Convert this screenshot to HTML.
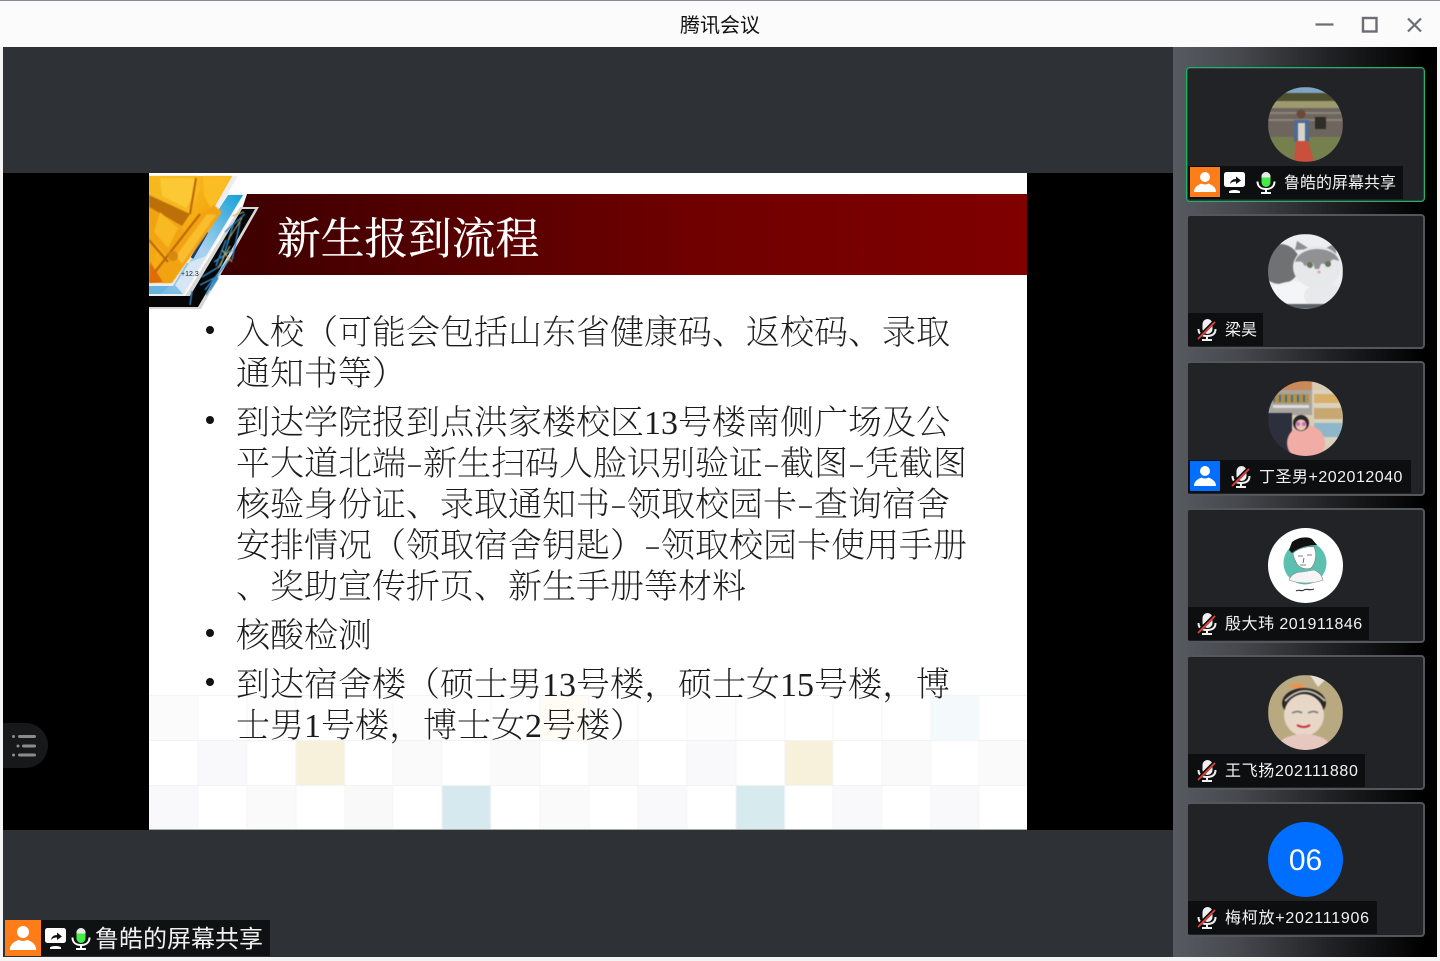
<!DOCTYPE html>
<html lang="zh"><head><meta charset="utf-8"><title>腾讯会议</title>
<style>
html,body{margin:0;padding:0;width:1440px;height:960px;overflow:hidden;background:#f4f4f4}
*{box-sizing:border-box}
.a{position:absolute}
#title{left:0;top:0;width:1440px;height:47px;background:#fbfbfb;border-top:1px solid #8a8a90;text-align:center;font:20px/50px "Liberation Sans","Noto Sans CJK SC",sans-serif;color:#111}
#main{left:3px;top:47px;width:1170px;height:910px;background:#2e3236}
#black{left:3px;top:173px;width:1170px;height:657px;background:#000}
#side{left:1173px;top:47px;width:264px;height:910px;background:linear-gradient(90deg,#575b61 0,#45484d 25%,#222326 58%,#000 95%)}
#slide{left:149px;top:173px;width:878px;height:657px;background:#fff;overflow:hidden}
.l{position:absolute;left:236px;white-space:nowrap;font:200 34px/40px "Liberation Serif","Noto Serif CJK SC",serif;color:#1b1b1b}
.h{display:inline-block;width:17px;text-align:center;color:#444;transform:scale(1.45,.7)}
.b{position:absolute;left:206px;width:8px;height:8px;border-radius:50%;background:#111}
.card{position:absolute;left:1186px;width:239px;height:135px;background:#222326;border:2px solid #54565b;border-radius:4px}
.lab{position:absolute;height:33px;background:#0c0e0f;color:#f2f2f2;font:16px/35px "Liberation Sans","Noto Sans CJK SC",sans-serif;white-space:nowrap}
.t{position:absolute;top:0}
.ph{filter:blur(.5px)}
</style></head><body>
<svg width="0" height="0" style="position:absolute"><defs>
<symbol id="person" viewBox="0 0 30 30"><circle cx="15" cy="10" r="5" fill="#fff"/><path d="M4 25c0-5 4-7 7.500-8.500 2 1.300 5 1.300 7 0C22 18 26 20 26 25z" fill="#fff"/></symbol>
<symbol id="share" viewBox="0 0 22 22"><rect x="0" y="0" width="21" height="15" rx="2.500" fill="#fff"/><path d="M5 19.500c1-2 10-2 11 0v1.500H5z" fill="#fff"/><path d="M6 12c.5-3.500 3-5 6-5V4.500l5 4-5 3.500V9.500c-2.500 0-4.500.5-6 2.500z" fill="#111"/></symbol>
<symbol id="micg" viewBox="0 0 20 22"><rect x="5.500" y="0" width="9" height="15" rx="4.500" fill="#46ec46"/><path d="M5.500 4.500a4.500 4.500 0 0 1 9 0v1h-9z" fill="#e8e8e8"/><path d="M1.500 9.500c0 5 3.500 7.500 8.500 7.500s8.500-2.500 8.500-7.500" fill="none" stroke="#fff" stroke-width="2"/><path d="M9 17h2v3h4v2H5v-2h4z" fill="#fff"/></symbol>
<symbol id="micx" viewBox="0 0 20 22"><rect x="5.500" y="0" width="10" height="15" rx="5" fill="#f0f0f0"/><path d="M1.500 10c0 5 3.500 7 8.500 7s8.500-2 8.500-7" fill="none" stroke="#f0f0f0" stroke-width="2"/><path d="M9 17h2v3h4v2H5v-2h4z" fill="#f0f0f0"/><path d="M1 19L18 2" stroke="#0c0e0f" stroke-width="3.600"/><path d="M1 20L18 3" stroke="#e8403a" stroke-width="1.800"/></symbol>
</defs></svg>

<div class="a" id="title">腾讯会议</div>
<svg class="a" style="left:1300px;top:0" width="140" height="47"><path d="M15.500 24.500h18" stroke="#6c6e73" stroke-width="2.200"/><rect x="63" y="18" width="13.500" height="13.500" fill="none" stroke="#6c6e73" stroke-width="2.400"/><path d="M108 18.500l13 13M121 18.500l-13 13" stroke="#6c6e73" stroke-width="2.200"/></svg>

<div class="a" id="main"></div>
<div class="a" id="side"></div>
<div class="a" id="black"></div>

<div class="a" id="slide">
<svg class="a" style="left:0;top:0" width="878" height="657" viewBox="149 173 878 657">
<defs>
<linearGradient id="red" x1="0" x2="1" y1="0" y2="0"><stop offset="0" stop-color="#3d0000"/><stop offset=".2" stop-color="#4d0000"/><stop offset=".6" stop-color="#700000"/><stop offset="1" stop-color="#800000"/></linearGradient>
<linearGradient id="gold" x1="0" x2="1" y1="0" y2="1"><stop offset="0" stop-color="#ffc62a"/><stop offset=".5" stop-color="#f5a911"/><stop offset="1" stop-color="#e8800a"/></linearGradient>
<linearGradient id="blue" x1="1" x2="0" y1="0" y2="1"><stop offset="0" stop-color="#14a0d8"/><stop offset=".5" stop-color="#a9d2ee"/><stop offset="1" stop-color="#6fb8e2"/></linearGradient>
</defs>
<!-- tiles -->
<g transform="translate(-.6 0)">
<g fill="#fcfbfc">
<rect x="149" y="695" width="49" height="45"/><rect x="247" y="695" width="49" height="45" fill="#fdfdfd"/><rect x="540" y="695" width="49" height="45" fill="#fefcf5"/><rect x="931" y="695" width="48" height="45" fill="#f4fafb"/>
<rect x="393" y="695" width="49" height="45" fill="#fdfdfd"/><rect x="687" y="695" width="49" height="45" fill="#fdfdfd"/>
</g>
<g fill="#f9f8fa">
<rect x="198" y="740" width="49" height="45"/><rect x="296" y="740" width="49" height="45" fill="#f7f1dc"/><rect x="393" y="740" width="49" height="45" fill="#fafafa"/><rect x="491" y="740" width="49" height="45" fill="#fafafa"/><rect x="589" y="740" width="49" height="45" fill="#fafafa"/><rect x="687" y="740" width="49" height="45"/><rect x="785" y="740" width="48" height="45" fill="#f7f1dc"/><rect x="882" y="740" width="49" height="45" fill="#fafafa"/><rect x="979" y="740" width="49" height="45" fill="#fafafa"/>
<rect x="149" y="785" width="49" height="45"/><rect x="247" y="785" width="49" height="45" fill="#fafafa"/><rect x="345" y="785" width="48" height="45" fill="#f9f9f9"/><rect x="442" y="785" width="49" height="45" fill="#d5e9ef"/><rect x="540" y="785" width="49" height="45" fill="#fafafa"/><rect x="638" y="785" width="49" height="45"/><rect x="736" y="785" width="49" height="45" fill="#d7eaee"/><rect x="833" y="785" width="49" height="45"/><rect x="931" y="785" width="48" height="45"/>
</g>
<path d="M198.500 695V830M247.500 695V830M296.500 695V830M345.500 695V830M393.500 695V830M442.500 695V830M491.500 695V830M540.500 695V830M589.500 695V830M638.500 695V830M687.500 695V830M736.500 695V830M785.500 695V830M833.500 695V830M882.500 695V830M931.500 695V830M979.500 695V830" stroke="#f6f5f7" stroke-width="1"/>
</g>
<path d="M149 695.500H1027M149 740.500H1027M149 785.500H1027" stroke="#f3f2f4" stroke-width="1"/>
<path d="M149 829.500H1027" stroke="#aaa"/>
<!-- banner -->
<polygon points="247,194 1027,194 1027,275 220,275" fill="url(#red)"/>
<!-- black layer -->
<polygon points="149,309 201,309 259,207 240,207 185,296 149,296" fill="#d8d8d8"/>
<polygon points="149,307 198,307 255,209 242,209 190,296 149,296" fill="#060606"/>
<g class="ph">
<path d="M233 225l-12 40M240 222l-8 38M214 262l18-12M205 290l24-30M190 305l2-14M210 290l8-12M222 265l-20 12M245 214l-20 18M226 240l-10 26M218 275l-12 20M200 285l16-8" stroke="#2f86c4" stroke-width="1.500" fill="none"/>
<path d="M228 240l14-22M218 268l12-22M244 212l-12 4M222 250l10 12" stroke="#d0b050" stroke-width="1"/>
</g>
<!-- blue layer -->
<polygon points="149,296 184,296 245,194 232,194 172,286 149,286" fill="#f0f0f0"/>
<polygon points="149,294 183,294 243,195 228,195 170,284 149,284" fill="url(#blue)"/>
<path d="M186 262L218 210" stroke="#f6e6d0" stroke-width="6"/>
<path d="M192 258L207 232" stroke="#1d3b78" stroke-width="3"/>
<polygon points="175,285 183,294 206,256 190,262" fill="#d6e6f4"/>
<polygon points="149,284 172,284 160,294 149,294" fill="#68b4e0"/>
<text x="181" y="276" font-family="Liberation Sans,sans-serif" font-size="7" fill="#223">+12.3</text>
<!-- gold -->
<polygon points="149,176 238,176 173,286 149,286" fill="#ededed"/>
<polygon points="149,176 232,176 171,283 149,283" fill="url(#gold)"/>
<g class="ph">
<polygon points="149,176 199,176 200,190 190,214 149,195" fill="#f6b81f"/>
<polygon points="160,178 195,178 195,192 186,208 162,196" fill="#fcc935"/>
<polygon points="149,195 190,214 182,226 149,207" fill="#bd6f08"/>
<polygon points="203,176 232,176 212,210 204,195" fill="#fbbe22"/>
<polygon points="149,207 180,226 186,234 170,260 158,246 149,240" fill="#f2a312"/>
<polygon points="160,212 178,228 168,248 154,232" fill="#f9b923"/>
<polygon points="149,240 158,246 150,270 149,270" fill="#f3a815"/>
<polygon points="155,272 200,214 214,205 222,212 172,283 162,283" fill="#f2a312"/>
<polygon points="176,256 207,214 216,215 182,264" fill="#f9bd2d"/>
<polygon points="150,262 163,282 149,283" fill="#e06c06"/>
<path d="M155 272L200 214M149 240L168 262M196 178L190 214" stroke="#b96408" stroke-width="2"/>
<circle cx="173" cy="256" r="5" fill="#d88710"/>
</g>
<text x="277" y="253" font-family="Liberation Serif,Noto Serif CJK SC,serif" font-size="43.700" fill="#fff" stroke="#fff" stroke-width=".3" transform="translate(0 1)">新生报到流程</text>
</svg>
</div>

<div class="b" style="top:326px"></div>
<div class="l" style="top:314px">入校（可能会包括山东省健康码、返校码、录取</div>
<div class="l" style="top:355px">通知书等）</div>
<div class="b" style="top:416px"></div>
<div class="l" style="top:404px">到达学院报到点洪家楼校区13号楼南侧广场及公</div>
<div class="l" style="top:445px">平大道北端<span class="h">-</span>新生扫码人脸识别验证<span class="h">-</span>截图<span class="h">-</span>凭截图</div>
<div class="l" style="top:486px">核验身份证、录取通知书<span class="h">-</span>领取校园卡<span class="h">-</span>查询宿舍</div>
<div class="l" style="top:527px">安排情况（领取宿舍钥匙）<span class="h">-</span>领取校园卡使用手册</div>
<div class="l" style="top:568px">、奖助宣传折页、新生手册等材料</div>
<div class="b" style="top:629px"></div>
<div class="l" style="top:617px">核酸检测</div>
<div class="b" style="top:678px"></div>
<div class="l" style="top:666px">到达宿舍楼（硕士男13号楼，硕士女15号楼，博</div>
<div class="l" style="top:707px">士男1号楼，博士女2号楼）</div>

<!-- side toggle -->
<div class="a" style="left:3px;top:723px;width:45px;height:45px;background:#17181a;border-radius:0 23px 23px 0"></div>
<svg class="a" style="left:10px;top:733px" width="30" height="26"><g fill="#8b8b8b"><circle cx="3.500" cy="3.500" r="1.500"/><rect x="8" y="2" width="18" height="3" rx="1.500"/><circle cx="8" cy="13" r="1.500"/><rect x="12" y="11.500" width="14" height="3" rx="1.500"/><circle cx="3.500" cy="22" r="1.500"/><rect x="8" y="20.500" width="18" height="3" rx="1.500"/></g></svg>

<!-- bottom label -->
<div class="a" style="left:5px;top:920px;width:265px;height:36px;background:#0f1113"></div>
<div class="a" style="left:5px;top:920px;width:36px;height:36px;background:#ff7d19"><svg width="36" height="36"><use href="#person" width="36" height="36"/></svg></div>
<svg class="a" style="left:45px;top:928px" width="22" height="22"><use href="#share" width="22" height="22"/></svg>
<svg class="a" style="left:71px;top:928px" width="20" height="22"><use href="#micg" width="20" height="22"/></svg>
<div class="a" style="left:95px;top:920px;font:24px/40px 'Liberation Sans','Noto Sans CJK SC',sans-serif;color:#f0f0f0;white-space:nowrap">鲁皓的屏幕共享</div>

<!-- cards -->
<div class="card" style="top:67px;border:1px solid #17b866;box-shadow:inset 0 0 0 1px #3a3c40"></div>
<div class="card" style="top:214px"></div>
<div class="card" style="top:361px"></div>
<div class="card" style="top:508px"></div>
<div class="card" style="top:655px"></div>
<div class="card" style="top:802px"></div>

<!-- avatars -->
<svg class="a" style="left:1268px;top:87px" width="75" height="75" viewBox="0 0 75 75"><defs><clipPath id="c1"><circle cx="37.500" cy="37.500" r="37.500"/></clipPath></defs><g clip-path="url(#c1)"><g class="ph"><rect width="75" height="75" fill="#7d7466"/><rect width="75" height="7" fill="#7fa5c4"/><rect y="6" width="75" height="8" fill="#4e5030"/><rect y="14" width="75" height="8" fill="#9e9a70"/><rect y="21" width="75" height="33" fill="#6e665e"/><path d="M0 26h75M0 33h75" stroke="#8b8477" stroke-width="2"/><rect x="47" y="30" width="11" height="12" fill="#2f2d28"/><rect y="50" width="75" height="25" fill="#76804f"/><rect x="26" y="33" width="15" height="22" fill="#4d6a92"/><rect x="30" y="36" width="7" height="18" fill="#d8d4ca"/><circle cx="33" cy="27" r="4.500" fill="#6a4a38"/><polygon points="28,54 40,54 46,75 26,75" fill="#c8503c"/></g></g></svg>

<svg class="a" style="left:1268px;top:234px" width="75" height="75" viewBox="0 0 75 75"><defs><clipPath id="c2"><circle cx="37.500" cy="37.500" r="37.500"/></clipPath></defs><g clip-path="url(#c2)"><g class="ph"><rect width="75" height="75" fill="#eceff1"/><ellipse cx="12" cy="30" rx="20" ry="20" fill="#6f7172"/><ellipse cx="30" cy="62" rx="32" ry="15" fill="#f4f5f6"/><ellipse cx="56" cy="62" rx="20" ry="13" fill="#e8e9eb"/><path d="M27 16l2-9 13 8zM58 14l10-5v13z" fill="#8d8f91"/><ellipse cx="49" cy="33" rx="24" ry="21" fill="#e6e8ea"/><path d="M27 28c2-8 12-13 22-13s20 4 22 12c-5-2-8-3-9 3-2 2-5-1-9 0l-2 5h-4l-2-6c-5-1-7 5-9 2-1-4-5-4-9-3z" fill="#8f9193"/><circle cx="42" cy="31" r="3" fill="#66755c"/><circle cx="60" cy="30" r="3" fill="#66755c"/><circle cx="51" cy="38" r="1.500" fill="#e3a0ac"/><rect y="70" width="75" height="5" fill="#5b6066"/></g></g></svg>

<svg class="a" style="left:1268px;top:381px" width="75" height="75" viewBox="0 0 75 75"><defs><clipPath id="c3"><circle cx="37.500" cy="37.500" r="37.500"/></clipPath></defs><g clip-path="url(#c3)"><g class="ph"><rect width="75" height="75" fill="#d8cdb4"/><rect width="44" height="9" fill="#c98a5a"/><rect y="9" width="44" height="25" fill="#a9a4a0"/><rect x="5" y="13" width="36" height="9" fill="#b89040"/><path d="M6 14v7M12 14v7M18 14v7M24 14v7M30 14v7M36 14v7" stroke="#3d6f9e" stroke-width="2"/><rect x="5" y="24" width="36" height="3" fill="#ddd"/><rect x="45" y="9" width="30" height="56" fill="#d9d2bf"/><rect x="46" y="13" width="28" height="9" fill="#d9b06a"/><rect x="46" y="27" width="28" height="11" fill="#c7a871"/><rect x="46" y="42" width="28" height="14" fill="#8fb7c9"/><rect x="0" y="32" width="24" height="43" fill="#2c2f3c"/><ellipse cx="38" cy="62" rx="19" ry="18" fill="#f1aca5"/><circle cx="33" cy="42" r="8" fill="#2a2528"/><circle cx="33" cy="44" r="5.500" fill="#e8c4b4"/><circle cx="30" cy="43" r="2" fill="#c86ac0"/><circle cx="36" cy="43" r="2" fill="#c86ac0"/></g></g></svg>

<svg class="a" style="left:1268px;top:528px" width="75" height="75" viewBox="0 0 75 75"><circle cx="37.500" cy="37.500" r="37.500" fill="#fff"/><circle cx="37" cy="35" r="21.500" fill="#5cc0b0"/><path d="M21 22l3-8c6-5 16-6 20-3l5 6c-8 0-18 2-25 8z" fill="#111"/><path d="M25 25c6-5 15-7 21-6 3 6 2 16-3 21-5 2-11 0-14-4-2-4-4-7-4-11z" fill="#fff" stroke="#777" stroke-width=".6"/><path d="M30 28h5M39 27h5M36 30l-1 5M32 37h6" stroke="#555" stroke-width=".8" fill="none"/><path d="M21 52c3-7 9-8 13-8l12-2c6 2 8 6 9 10-10 4-24 4-34 0z" fill="#f5f5f5" stroke="#888" stroke-width=".6"/><path d="M28 63c3-2 6 1 8-1s6 1 10-1" stroke="#333" stroke-width="1.200" fill="none"/></svg>

<svg class="a" style="left:1268px;top:675px" width="75" height="75" viewBox="0 0 75 75"><defs><clipPath id="c5"><circle cx="37.500" cy="37.500" r="37.500"/></clipPath></defs><g clip-path="url(#c5)"><g class="ph"><rect width="75" height="75" fill="#b9a981"/><path d="M42 0l8 12 10-10-4-2z" fill="#e8e2d8"/><path d="M20 11c6-3 12-3 18 0l-8 3z" fill="#f0904a"/><ellipse cx="36" cy="28" rx="22" ry="15" fill="#2c2524"/><ellipse cx="36" cy="40" rx="20" ry="21" fill="#e6d7c6"/><path d="M24 38q6-3 10 0M40 38q6-3 10 0" stroke="#777" stroke-width="1.500" fill="none"/><path d="M29 50q7 4 13 0" stroke="#d03040" stroke-width="2" fill="none"/><ellipse cx="36" cy="72" rx="26" ry="13" fill="#e6c8c0"/><path d="M17 26q20-20 40 0" stroke="#bfc0b0" stroke-width="2" fill="none"/></g></g></svg>

<div class="a" style="left:1268px;top:822px;width:75px;height:75px;border-radius:50%;background:#006fff;color:#fff;text-align:center;font:30px/78px 'Liberation Sans',sans-serif">06</div>

<!-- labels -->
<div class="lab" style="left:1188px;top:166px;width:215px"><div class="a" style="left:2px;top:1px;width:30px;height:30px;background:#ff7d19"><svg width="30" height="30"><use href="#person" width="30" height="30"/></svg></div><svg class="a" style="left:36px;top:6px" width="22" height="22"><use href="#share" width="22" height="22"/></svg><svg class="a" style="left:68px;top:6px" width="20" height="22"><use href="#micg" width="20" height="22"/></svg><span class="t" style="left:96px">鲁皓的屏幕共享</span></div>

<div class="lab" style="left:1188px;top:313px;width:75px"><svg class="a" style="left:9px;top:6px" width="20" height="22"><use href="#micx" width="20" height="22"/></svg><span class="t" style="left:37px">梁昊</span></div>

<div class="lab" style="left:1188px;top:460px;width:223px"><div class="a" style="left:2px;top:1px;width:30px;height:30px;background:#006fff"><svg width="30" height="30"><use href="#person" width="30" height="30"/></svg></div><svg class="a" style="left:43px;top:6px" width="20" height="22"><use href="#micx" width="20" height="22"/></svg><span class="t" style="left:71px;letter-spacing:.5px">丁圣男+202012040</span></div>

<div class="lab" style="left:1188px;top:607px;width:181px"><svg class="a" style="left:9px;top:6px" width="20" height="22"><use href="#micx" width="20" height="22"/></svg><span class="t" style="left:37px;letter-spacing:.48px">殷大玮 201911846</span></div>

<div class="lab" style="left:1188px;top:754px;width:177px"><svg class="a" style="left:9px;top:6px" width="20" height="22"><use href="#micx" width="20" height="22"/></svg><span class="t" style="left:37px;letter-spacing:.65px">王飞扬202111880</span></div>

<div class="lab" style="left:1188px;top:901px;width:189px"><svg class="a" style="left:9px;top:6px" width="20" height="22"><use href="#micx" width="20" height="22"/></svg><span class="t" style="left:37px;letter-spacing:.75px">梅柯放+202111906</span></div>
</body></html>
